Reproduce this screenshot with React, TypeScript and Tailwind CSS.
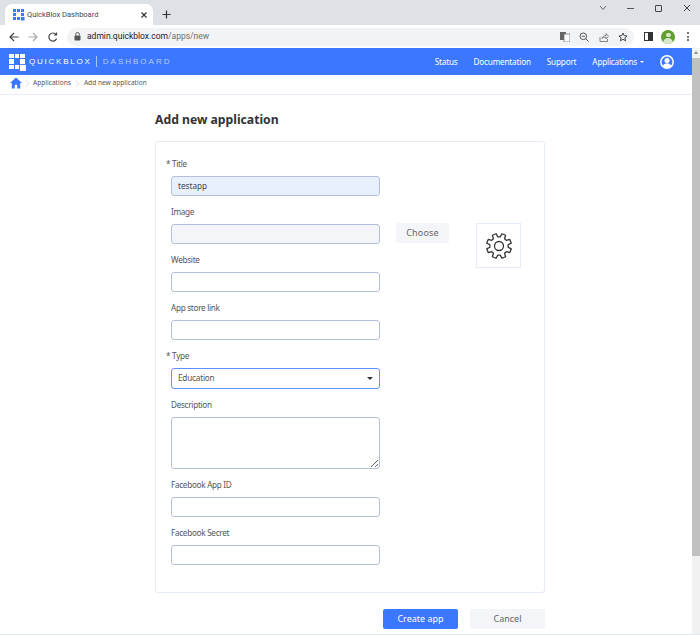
import React from "react";

const gearPath = (() => {
  const c = 14;
  const pts: string[] = [];
  for (let i = 0; i < 8; i++) {
    const a = (i * Math.PI) / 4 + Math.PI / 8;
    const p = (r: number, d: number) => {
      const t = a + (d * Math.PI) / 180;
      return `${(c + r * Math.cos(t)).toFixed(2)} ${(c + r * Math.sin(t)).toFixed(2)}`;
    };
    pts.push(p(9.2, -15), p(12.6, -9), p(12.6, 9), p(9.2, 15));
  }
  return `M${pts.join("L")}Z`;
})();

function QbLogo({ cell, gap, color }: { cell: number; gap: number; color: string }) {
  return (
    <div className="grid shrink-0" style={{ gridTemplateColumns: `repeat(3, ${cell}px)`, gridAutoRows: `${cell}px`, gap }}>
      {Array.from({ length: 9 }).map((_, i) => (
        <div key={i} style={i === 4 ? {} : i === 8 ? { background: color, transform: "scale(1.2) translate(6%,6%)" } : { background: color }} />
      ))}
    </div>
  );
}

const inputCls = "block w-[209px] h-[20px] rounded-[3px] border border-[#b4c0d9] px-[6px] pb-[1px] text-[8.2px] text-[#444] outline-none";

function Field({ label, required, children, h = 48 }: { label: string; required?: boolean; children: React.ReactNode; h?: number }) {
  return (
    <div className="flex flex-col" style={{ height: h }}>
      <div className={`h-[25px] pt-[2px] shrink-0 flex items-center text-[8.2px] tracking-[-.3px] text-[#555] whitespace-pre ${required ? "-ml-[5px]" : ""}`}>
        {required ? "* " : ""}
        {label}
      </div>
      {children}
    </div>
  );
}

export default function App() {
  return (
    <div className="w-[700px] h-[635px] overflow-hidden bg-white flex flex-col font-['Noto_Sans',sans-serif]">
      {/* Tab strip */}
      <div className="h-[25px] bg-[#dee1e6] flex items-end pl-[5px] shrink-0">
        <div className="w-[148px] h-[21px] bg-white rounded-t-[7px] flex items-center pl-[8px] pr-[5px]">
          <QbLogo cell={3} gap={1} color="#3b78ff" />
          <span className="ml-[3px] text-[7.500px] text-[#45494e] font-['Roboto',sans-serif] flex-1">QuickBlox Dashboard</span>
          <svg width="8" height="8" viewBox="0 0 8 8" stroke="#333" strokeWidth="1.2"><path d="M1.500 1.500l5 5M6.500 1.500l-5 5" /></svg>
        </div>
        <svg className="ml-[9px] mb-[6px]" width="9" height="9" viewBox="0 0 9 9" stroke="#333" strokeWidth="1.2"><path d="M4.500 .5v8M.5 4.500h8" /></svg>
        <div className="ml-auto flex items-center pr-[9px] mb-[13px]">
          <svg width="8" height="6" viewBox="0 0 8 6" fill="none" stroke="#666" strokeWidth="1"><path d="M1 1l3 3.500L7 1" /></svg>
          <div className="ml-[20px] w-[7px] h-px bg-[#555]" />
          <div className="ml-[21px] w-[7px] h-[7px] border border-[#444] rounded-[1px]" />
          <svg className="ml-[21px]" width="8" height="8" viewBox="0 0 8 8" stroke="#444" strokeWidth="1"><path d="M1 1l6 6M7 1l-6 6" /></svg>
        </div>
      </div>
      {/* Toolbar */}
      <div className="h-[23px] bg-white flex items-center shrink-0 pl-[9px]">
        <svg width="10" height="10" viewBox="0 0 10 10" fill="none" stroke="#444" strokeWidth="1.200"><path d="M9.500 5H1M5 1L1 5l4 4" /></svg>
        <svg className="ml-[9px]" width="10" height="10" viewBox="0 0 10 10" fill="none" stroke="#aaa" strokeWidth="1.200"><path d="M.5 5H9M5 1l4 4-4 4" /></svg>
        <svg className="ml-[10px]" width="10" height="10" viewBox="0 0 10 10" fill="none" stroke="#444" strokeWidth="1.200"><path d="M8.600 6.500A4 4 0 1 1 8 2.500M8.500.5v2.500H6" /></svg>
        <div className="ml-[9px] w-[567px] h-[18px] rounded-full bg-[#f1f3f4] flex items-center pl-[7px] pr-[6px]">
          <svg width="7" height="9" viewBox="0 0 7 9" fill="#555"><rect x=".5" y="3.500" width="6" height="5" rx=".8" /><path d="M1.700 3.500V2.300a1.800 1.800 0 0 1 3.600 0v1.200" fill="none" stroke="#555" /></svg>
          <span className="ml-[6px] text-[8.500px] text-[#222] font-['Roboto',sans-serif]">admin.quickblox.com<span className="text-[#6a6f75]">/apps/new</span></span>
          <div className="ml-auto flex items-center gap-[9.500px]">
            <svg width="10" height="10" viewBox="0 0 10 10"><rect x="0" y="0" width="6" height="8" fill="#666" /><rect x="4" y="2" width="6" height="8" fill="#fff" stroke="#777" strokeWidth=".8" /></svg>
            <svg width="10" height="10" viewBox="0 0 10 10" fill="none" stroke="#555" strokeWidth="1"><circle cx="4.300" cy="4.300" r="3.300" /><path d="M6.800 6.800L9.500 9.500M2.800 4.300h3" /></svg>
            <svg width="10" height="10" viewBox="0 0 10 10" fill="none" stroke="#777" strokeWidth=".9"><path d="M1 5v4.500h7.500V7M3 6.500C3.500 4.500 5 3.500 7 3.500V1.500l2.500 2.800L7 7V5.200C5.300 5.200 4 5.500 3 6.500z" /></svg>
            <svg width="10" height="10" viewBox="0 0 10 10" fill="none" stroke="#444" strokeWidth="1"><path d="M5 1l1.200 2.700 2.900.3-2.200 1.900.7 2.900L5 7.300 2.400 8.800l.7-2.900L.9 4l2.900-.3z" /></svg>
          </div>
        </div>
        <div className="ml-[10px] w-[9px] h-[9px] border border-[#333] flex justify-end"><div className="w-[4px] bg-[#333]" /></div>
        <div className="ml-[8px] w-[14px] h-[14px] rounded-full bg-[#5f9e2f] overflow-hidden flex flex-col items-center">
          <div className="mt-[3px] w-[5px] h-[5px] rounded-full bg-[#d9e8cd]" />
          <div className="mt-[1px] w-[10px] h-[6px] rounded-t-full bg-[#d9e8cd]" />
        </div>
        <div className="ml-[12px] flex flex-col gap-[1.500px]">
          <div className="w-[2px] h-[2px] rounded-full bg-[#444]" />
          <div className="w-[2px] h-[2px] rounded-full bg-[#444]" />
          <div className="w-[2px] h-[2px] rounded-full bg-[#444]" />
        </div>
      </div>
      {/* Page */}
      <div className="flex flex-1 min-h-0 border-b border-[#e4e6ea]">
        <div className="w-[692px] flex flex-col min-w-0">
          <header className="h-[27px] bg-[#3b78ff] flex items-center pl-[9px] pr-[18px] text-white shrink-0">
            <QbLogo cell={4.500} gap={1.200} color="#ffffff" />
            <span className="ml-[4px] text-[8px] tracking-[1.800px] font-['Liberation_Sans',sans-serif]">QUICKBLOX</span>
            <span className="ml-[4px] h-[11px] w-px bg-[#a9c3ff]" />
            <span className="ml-[6px] text-[8px] tracking-[2px] text-[#b5ccff] font-['Liberation_Sans',sans-serif]">DASHBOARD</span>
            <nav className="ml-auto flex items-center text-[8.200px] tracking-[-.2px]">
              <span className="pt-[1px]">Status</span>
              <span className="ml-[16px] pt-[1px]">Documentation</span>
              <span className="ml-[16px] pt-[1px]">Support</span>
              <span className="ml-[16px] pt-[1px]">Applications</span>
              <span className="ml-[3px] w-0 h-0 border-x-[2px] border-x-transparent border-t-[2px] border-t-white" />
              <svg className="ml-[16px]" width="14" height="14" viewBox="0 0 14 14">
                <circle cx="7" cy="7" r="6.200" fill="none" stroke="#fff" strokeWidth="1.500" />
                <circle cx="7" cy="5.600" r="2.500" fill="#fff" />
                <path d="M2.800 11c.8-2 2.400-2.800 4.200-2.800s3.400.8 4.200 2.800A6 6 0 0 1 7 13a6 6 0 0 1-4.200-2z" fill="#fff" />
              </svg>
            </nav>
          </header>
          <div className="h-[20px] border-b border-[#e8edf8] flex items-center pl-[10px] pb-[3px] text-[6.600px] text-[#555] shrink-0">
            <svg width="12" height="12" viewBox="0 0 10 10" fill="#3b78ff"><path d="M5 .5L0 5h1.500v4.500h2.500V6.500h2v3h2.500V5H10z" /></svg>
            <svg className="ml-[3px]" width="5" height="7" viewBox="0 0 5 7" fill="none" stroke="#ccc" strokeWidth=".7"><path d="M1 .5l3 3-3 3" /></svg>
            <span className="ml-[3px]">Applications</span>
            <svg className="ml-[4px]" width="5" height="7" viewBox="0 0 5 7" fill="none" stroke="#ccc" strokeWidth=".7"><path d="M1 .5l3 3-3 3" /></svg>
            <span className="ml-[4px]">Add new application</span>
          </div>
          <main className="ml-[155px] w-[390px]">
            <h1 className="mt-[16px] h-[19px] flex items-center text-[12.200px] font-bold text-[#333]">Add new application</h1>
            <section className="mt-[11px] h-[452px] rounded-[3px] border border-[#e6ebf8] pl-[15px] pt-[9px] relative">
              <Field label="Title" required>
                <input readOnly value="testapp" className={`${inputCls} bg-[#e8f0fe]`} />
              </Field>
              <Field label="Image">
                <input readOnly className={`${inputCls} bg-[#f3f5f9]`} />
              </Field>
              <Field label="Website">
                <input readOnly className={`${inputCls} bg-white`} />
              </Field>
              <Field label="App store link">
                <input readOnly className={`${inputCls} bg-white`} />
              </Field>
              <Field label="Type" required h={49}>
                <div className="w-[209px] h-[21px] rounded-[3px] border border-[#5b93ff] flex items-center pl-[6px] pr-[6px] text-[8.200px] tracking-[-.2px] text-[#555]">
                  <span className="flex-1">Education</span>
                  <span className="w-0 h-0 border-x-[3px] border-x-transparent border-t-[3px] border-t-[#333]" />
                </div>
              </Field>
              <Field label="Description" h={80}>
                <textarea readOnly className="block w-[209px] h-[52px] rounded-[3px] border border-[#b4c0d9] bg-white outline-none" />
              </Field>
              <Field label="Facebook App ID">
                <input readOnly className={`${inputCls} bg-white`} />
              </Field>
              <Field label="Facebook Secret">
                <input readOnly className={`${inputCls} bg-white`} />
              </Field>
              <button className="absolute left-[240px] top-[81px] w-[53px] h-[20px] rounded-[2px] bg-[#f3f5f9] text-[9px] text-[#666] tracking-[.2px]">Choose</button>
              <div className="absolute left-[320px] top-[81px] w-[45px] h-[45px] border border-[#e6ebf8] flex items-center justify-center">
                <svg width="28" height="28" viewBox="0 0 28 28" fill="none" stroke="#333" strokeWidth="1.300" strokeLinejoin="round">
                  <path d={gearPath} />
                  <circle cx="14" cy="14" r="4.500" />
                </svg>
              </div>
            </section>
            <div className="mt-[16px] flex justify-end gap-[12px]">
              <button className="w-[75px] h-[20px] rounded-[2px] bg-[#3b78ff] text-white text-[9px]">Create app</button>
              <button className="w-[75px] h-[20px] rounded-[2px] bg-[#f3f5f9] text-[#666] text-[9px]">Cancel</button>
            </div>
          </main>
        </div>
        <div className="w-[8px] bg-[#f1f1f1] flex flex-col items-center shrink-0">
          <div className="mt-[3px] w-0 h-0 border-x-[2px] border-x-transparent border-b-[3px] border-b-[#888]" />
          <div className="mt-[4px] w-full h-[498px] bg-[#c1c1c1]" />
        </div>
      </div>
    </div>
  );
}
